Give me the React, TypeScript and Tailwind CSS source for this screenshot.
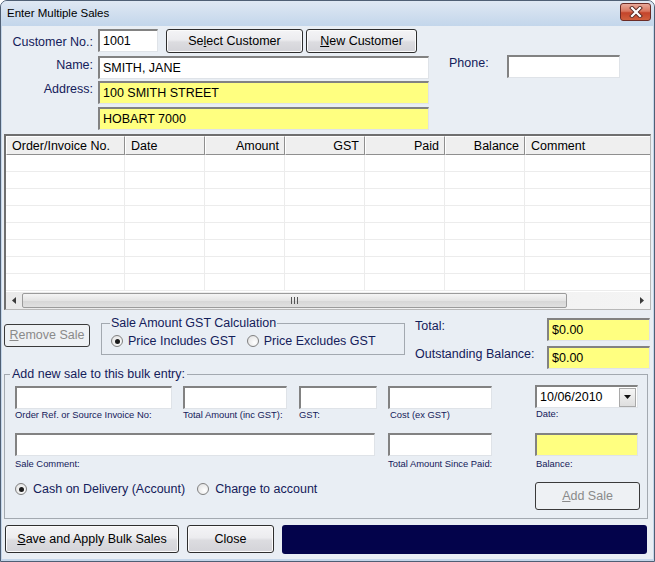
import React from "react";

type P = { className?: string; children?: React.ReactNode };

function Field({ className = "", yellow = false, children }: P & { yellow?: boolean }) {
  return (
    <div
      className={`h-[23px] border-t-2 border-l-2 border-b border-r border-t-[#828282] border-l-[#828282] border-b-[#dfe3e8] border-r-[#dfe3e8] ${
        yellow ? "bg-[#ffff80]" : "bg-white"
      } flex items-center pl-[3px] text-[12.5px] text-black whitespace-nowrap overflow-hidden ${className}`}
    >
      {children}
    </div>
  );
}

function Btn({ className = "", disabled = false, children }: P & { disabled?: boolean }) {
  return (
    <div
      className={`rounded-[3px] border flex items-center justify-center text-[12.5px] whitespace-nowrap ${
        disabled
          ? "border-[#3a3a3a] bg-[#eef1f4] text-[#8a8a8a]"
          : "border-[#2e2e2e] bg-[linear-gradient(#f4f4f6_0%,#ececef_45%,#dcdce0_55%,#d3d3d8_100%)] text-black shadow-[inset_0_0_0_1px_#fbfbfb]"
      } ${className}`}
    >
      {children}
    </div>
  );
}

function Radio({ checked = false }: { checked?: boolean }) {
  return (
    <div className="w-[12px] h-[12px] rounded-full border border-[#808080] bg-[radial-gradient(circle_at_65%_65%,#ffffff_0%,#e4e4e4_80%)] flex items-center justify-center shrink-0">
      {checked && <div className="w-[5px] h-[5px] rounded-full bg-[#1b1b1b]" />}
    </div>
  );
}

function Small({ className = "", children }: P) {
  return <div className={`text-[9.4px] leading-[12px] text-[#14205a] whitespace-nowrap ${className}`}>{children}</div>;
}

const cols = [
  { w: "w-[119px]", label: "Order/Invoice No.", right: false },
  { w: "w-[80px]", label: "Date", right: false },
  { w: "w-[80px]", label: "Amount", right: true },
  { w: "w-[80px]", label: "GST", right: true },
  { w: "w-[80px]", label: "Paid", right: true },
  { w: "w-[80px]", label: "Balance", right: true },
];

export default function App() {
  return (
    <div className="w-[655px] h-[562px] font-['Liberation_Sans',Arial,sans-serif] text-[12.5px] text-[#14205a] bg-[#c4d6ea] border border-[#4f5f74] rounded-t-[7px] flex flex-col overflow-hidden">
      {/* Title bar */}
      <div className="h-[25px] shrink-0 flex items-center bg-[linear-gradient(#dfe8f3,#c3d6eb)] pl-[6px] pr-[3px]">
        <span className="text-[11.5px] text-black leading-none">Enter Multiple Sales</span>
        <div className="ml-auto mt-[-4px] w-[31px] h-[18px] rounded-[3px] border border-[#6b2b26] bg-[linear-gradient(#e9a99a_0%,#d9765f_45%,#c4442b_55%,#d0603e_100%)] flex items-center justify-center">
          <svg width="14" height="12" viewBox="0 0 14 12">
            <path d="M3 2 L11 10 M11 2 L3 10" stroke="#5a2a24" strokeWidth="4" strokeLinecap="square" />
            <path d="M3 2 L11 10 M11 2 L3 10" stroke="#ffffff" strokeWidth="2.2" strokeLinecap="square" />
          </svg>
        </div>
      </div>

      {/* Body */}
      <div className="flex-1 mx-[1px] mb-[2px] bg-[#e9eef4] flex flex-col">
        {/* Customer section */}
        <div className="h-[108px] shrink-0 flex flex-col">
          <div className="flex items-center mt-[3px] h-[24px]">
            <div className="w-[91px] text-right pt-[3px]">Customer No.:</div>
            <Field className="ml-[5px] w-[60px] mt-[-1px]">1001</Field>
            <Btn className="ml-[8px] w-[137px] h-[24px]">
              <span className="pt-[1px]">
                Se<u>l</u>ect Customer
              </span>
            </Btn>
            <Btn className="ml-[3px] w-[111px] h-[24px]">
              <span className="pt-[1px]">
                <u>N</u>ew Customer
              </span>
            </Btn>
          </div>
          <div className="flex items-start mt-[2px] h-[24px]">
            <div className="w-[91px] text-right leading-[15px] pt-[3px]">Name:</div>
            <Field className="ml-[5px] w-[331px] mt-[1px]">SMITH, JANE</Field>
            <div className="ml-[20px] w-[58px] leading-[15px] pt-[1px]">Phone:</div>
            <Field className="w-[113px]" />
          </div>
          <div className="flex items-start mt-[2px] h-[23px]">
            <div className="w-[91px] text-right leading-[15px] pt-[1px]">Address:</div>
            <Field yellow className="ml-[5px] w-[331px]">
              100 SMITH STREET
            </Field>
          </div>
          <div className="flex items-start mt-[3px] h-[23px]">
            <Field yellow className="ml-[96px] w-[331px]">
              HOBART 7000
            </Field>
          </div>
        </div>

        {/* Grid */}
        <div className="ml-[2px] w-[647px] h-[176px] shrink-0 border-t-2 border-l-2 border-b border-r border-t-[#6f6f6f] border-l-[#6f6f6f] border-b-[#b8b8b8] border-r-[#b8b8b8] bg-white flex flex-col overflow-hidden text-black">
          <div className="h-[19px] shrink-0 flex bg-[#efefef]">
            {cols.map((c) => (
              <div
                key={c.label}
                className={`${c.w} shrink-0 h-full pt-[1px] border-l border-t border-l-white border-t-white border-r border-b border-r-[#8f8f8f] border-b-[#8f8f8f] flex items-center ${
                  c.right ? "justify-end pr-[5px]" : "pl-[5px]"
                }`}
              >
                {c.label}
              </div>
            ))}
            <div className="flex-1 h-full pt-[1px] border-l border-t border-l-white border-t-white border-b border-b-[#8f8f8f] flex items-center pl-[5px]">
              Comment
            </div>
          </div>
          <div className="flex-1 overflow-hidden">
            {Array.from({ length: 8 }).map((_, i) => (
              <div key={i} className="h-[17px] flex border-b border-b-[#ececec]">
                {cols.map((c) => (
                  <div key={c.label} className={`${c.w} shrink-0 h-full border-r border-r-[#ececec]`} />
                ))}
                <div className="flex-1" />
              </div>
            ))}
          </div>
          {/* Scrollbar */}
          <div className="h-[17px] shrink-0 flex items-center bg-[linear-gradient(90deg,#eaeaea,#f4f4f4)]">
            <div className="w-[16px] h-full flex items-center justify-center">
              <svg width="4" height="7" viewBox="0 0 4 7">
                <path d="M4 0 L0 3.5 L4 7 Z" fill="#3b3b3b" />
              </svg>
            </div>
            <div className="w-[545px] h-[15px] rounded-[2px] border border-[#9b9b9b] bg-[linear-gradient(#f5f5f5,#e4e4e4_50%,#d6d6d6_51%,#e0e0e0)] flex items-center justify-center">
              <svg width="7" height="7" viewBox="0 0 7 7">
                <path d="M0.5 0 V7 M3.5 0 V7 M6.5 0 V7" stroke="#555" strokeWidth="1" />
              </svg>
            </div>
            <div className="flex-1" />
            <div className="w-[16px] h-full flex items-center justify-center">
              <svg width="4" height="7" viewBox="0 0 4 7">
                <path d="M0 0 L4 3.5 L0 7 Z" fill="#3b3b3b" />
              </svg>
            </div>
          </div>
        </div>

        {/* Section B */}
        <div className="h-[57px] shrink-0 flex items-start">
          <Btn disabled className="ml-[2px] mt-[14px] w-[86px] h-[23px]">
            <span>
              <u>R</u>emove Sale
            </span>
          </Btn>
          <fieldset className="ml-[11px] mt-[6px] w-[304px] h-[39px] border border-[#a3a9b0]">
            <legend className="ml-[8px] px-[1px] leading-[15px]">Sale Amount GST Calculation</legend>
            <div className="flex items-center h-[16px] mt-[2px] pl-[9px]">
              <Radio checked />
              <span className="ml-[5px]">Price Includes GST</span>
              <div className="ml-[11px]">
                <Radio />
              </div>
              <span className="ml-[5px]">Price Excludes GST</span>
            </div>
          </fieldset>
          <div className="ml-[10px] flex flex-col">
            <div className="flex items-start mt-[8px] h-[23px]">
              <div className="w-[132px] leading-[15px] pt-[1px]">Total:</div>
              <Field yellow className="w-[103px]">
                $0.00
              </Field>
            </div>
            <div className="flex items-start mt-[5px] h-[23px]">
              <div className="w-[132px] leading-[15px] pt-[1px]">Outstanding Balance:</div>
              <Field yellow className="w-[103px]">
                $0.00
              </Field>
            </div>
          </div>
        </div>

        {/* Group C */}
        <fieldset className="ml-[2px] w-[644px] h-[152px] shrink-0 border border-[#a3a9b0]">
          <legend className="ml-[5px] px-[2px] leading-[15px]">Add new sale to this bulk entry:</legend>
          <div className="flex items-start mt-[4px]">
            <div className="ml-[10px] w-[157px] flex flex-col">
              <Field />
              <Small className="h-[24px]">Order Ref. or Source Invoice No:</Small>
            </div>
            <div className="ml-[11px] w-[104px] flex flex-col">
              <Field />
              <Small className="h-[24px]">Total Amount (inc GST):</Small>
            </div>
            <div className="ml-[12px] w-[78px] flex flex-col">
              <Field />
              <Small className="h-[24px]">GST:</Small>
            </div>
            <div className="ml-[11px] w-[104px] flex flex-col">
              <Field />
              <Small className="h-[24px] pl-[2px]">Cost (ex GST)</Small>
            </div>
            <div className="ml-[43px] w-[103px] flex flex-col mt-[-1px]">
              <Field className="pr-[1px]">
                <span className="mt-[1px]">10/06/2010</span>
                <div className="ml-auto w-[17px] h-[19px] bg-[linear-gradient(#f6f6f6,#dedede)] border border-[#a9a9a9] flex items-center justify-center">
                  <svg width="7" height="4" viewBox="0 0 7 4">
                    <path d="M0 0 H7 L3.5 4 Z" fill="#111" />
                  </svg>
                </div>
              </Field>
              <Small className="h-[25px] pl-[1px]">Date:</Small>
            </div>
          </div>
          <div className="flex items-start">
            <div className="ml-[10px] w-[360px] flex flex-col">
              <Field />
              <Small className="h-[16px] pt-[2px]">Sale Comment:</Small>
            </div>
            <div className="ml-[13px] w-[104px] flex flex-col">
              <Field />
              <Small className="h-[16px] pt-[2px]">Total Amount Since Paid:</Small>
            </div>
            <div className="ml-[43px] w-[103px] flex flex-col">
              <Field yellow />
              <Small className="h-[16px] pt-[2px] pl-[1px]">Balance:</Small>
            </div>
          </div>
          <div className="flex items-start">
            <div className="ml-[10px] mt-[9px] h-[16px] flex items-center">
              <Radio checked />
              <span className="ml-[6px]">Cash on Delivery (Account)</span>
              <div className="ml-[12px]">
                <Radio />
              </div>
              <span className="ml-[6px]">Charge to account</span>
            </div>
            <Btn disabled className="ml-auto mr-[7px] mt-[10px] w-[105px] h-[28px]">
              <span>
                <u>A</u>dd Sale
              </span>
            </Btn>
          </div>
        </fieldset>

        {/* Bottom buttons */}
        <div className="flex items-start mt-[6px]">
          <Btn className="ml-[3px] w-[174px] h-[28px]">
            <span>
              <u>S</u>ave and Apply Bulk Sales
            </span>
          </Btn>
          <Btn className="ml-[8px] w-[87px] h-[28px]">Close</Btn>
          <div className="ml-[8px] w-[365px] h-[29px] rounded-[3px] bg-[#03034b]" />
        </div>
      </div>
    </div>
  );
}
